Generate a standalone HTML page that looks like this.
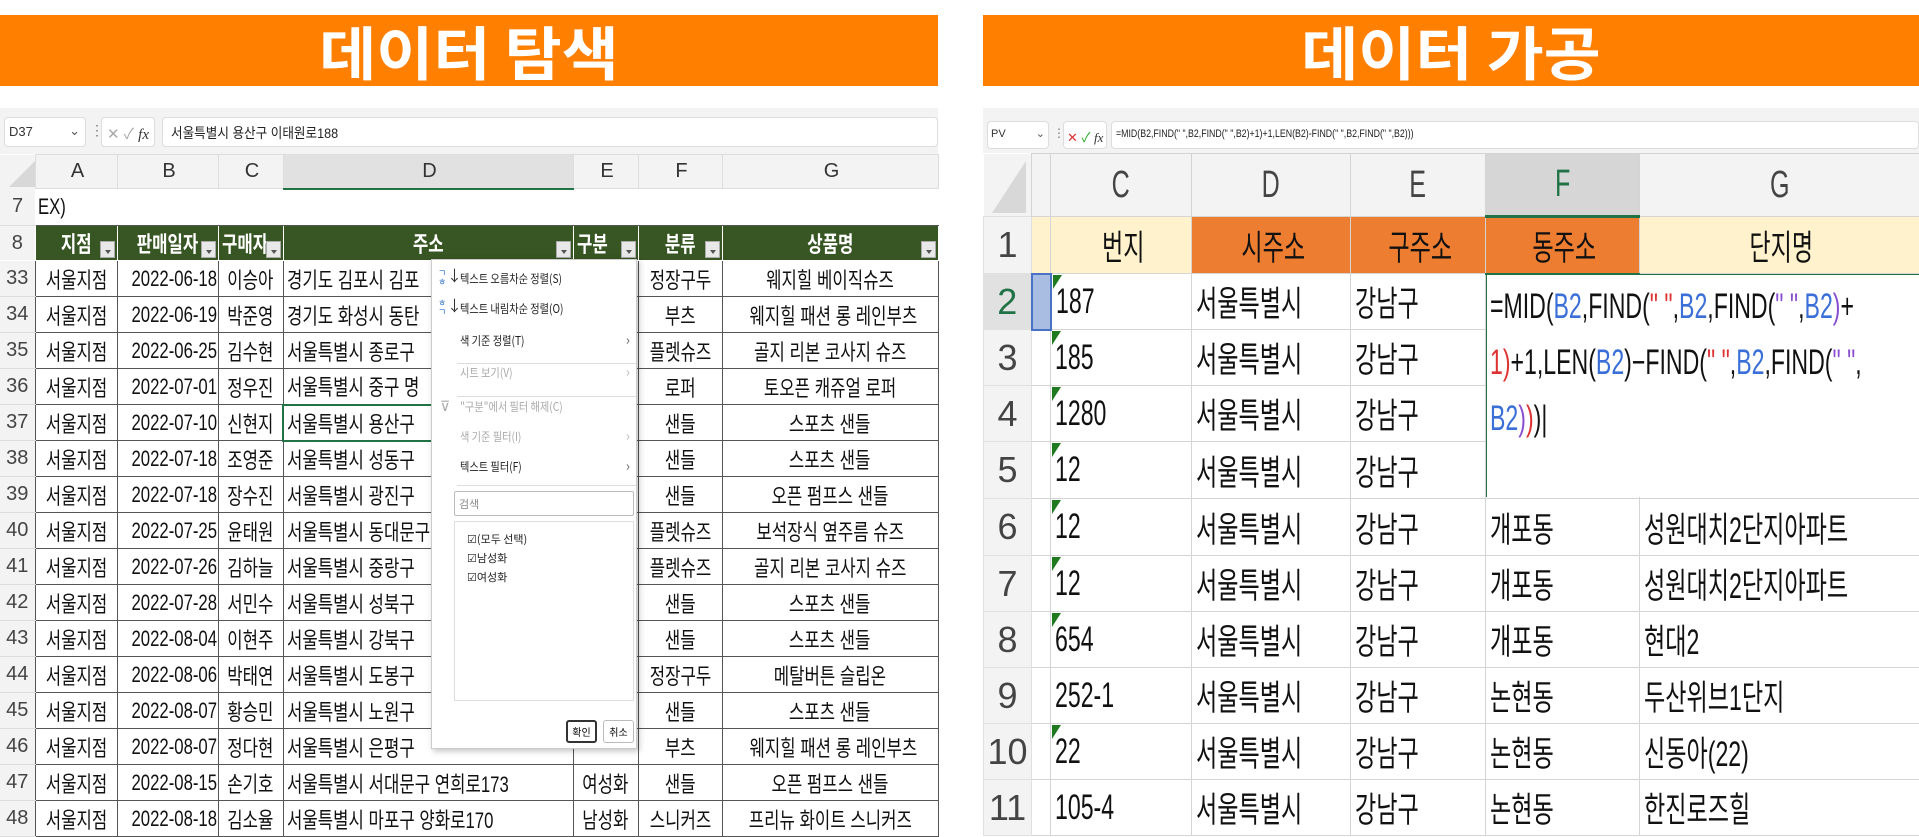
<!DOCTYPE html>
<html><head><meta charset="utf-8">
<style>
*{margin:0;padding:0;box-sizing:border-box}
body{width:1919px;height:835px;overflow:hidden;background:#fff;font-family:"Liberation Sans","Noto Sans CJK KR",sans-serif;position:relative}
.ban{position:absolute;top:15px;height:71px;background:#ff7f00;color:#fff;font-weight:bold;font-size:58px;text-align:center;line-height:71px;font-family:"Noto Sans CJK KR",sans-serif}
.ban span{display:inline-block;transform:scaleX(1.07)}
.gray{position:absolute;background:#f3f3f3}
.fbar{position:absolute;background:#fff;border:1px solid #ddd;border-radius:4px}
.t{display:inline-block;transform:scaleX(.76);transform-origin:left center;white-space:nowrap}
.c .t{transform-origin:center center}
table{position:absolute;border-collapse:collapse;table-layout:fixed}
td{overflow:hidden;white-space:nowrap;padding:0}
#L td{font-size:22px;color:#111;border:1px solid #555;padding-left:3px}
#L td.c{text-align:center;padding-left:0}
#L tr.h td{background:#f3f3f3;color:#333;font-size:20px;border:1px solid #ddd;text-align:center}
#L td.rh{background:#f3f3f3;color:#444;font-size:20px;text-align:center;border:none;border-bottom:1px solid #ddd;padding:0}
#L tr.g td{background:#375623;color:#fff;font-weight:bold;position:relative;border-color:#fff}
.fb{position:absolute;right:2px;bottom:2px;width:15px;height:17px;background:#e8e8e8;border:1px solid #aaa}
.fb:after{content:"";position:absolute;left:4px;top:8px;border:3px solid transparent;border-top:4px solid #555}
#R td{font-size:35px;color:#111;border:1px solid #d4d4d4;padding-left:4px;position:relative}
#R .t{transform:scaleX(.66)}
#R tr.h td{background:#f3f3f3;color:#444;font-size:38px;text-align:center;padding:0}
#R td.rh{background:#f3f3f3;color:#444;font-size:36px;text-align:center;padding:0;border-color:#e0e0e0}
.tri{position:absolute;left:1px;top:1px;border-left:9px solid #1f7a1f;border-bottom:14px solid transparent}
.menu{position:absolute;left:431px;top:259px;width:206px;height:490px;background:#fff;border:1px solid #ccc;box-shadow:2px 2px 6px rgba(0,0,0,.25);font-family:"Noto Sans CJK KR",sans-serif}
.mi{position:absolute;left:28px;font-size:12px;color:#222;transform:scaleX(.85);transform-origin:left}
.dis{color:#aaa}
.arr{position:absolute;right:6px;font-size:14px;color:#666}
.sep{position:absolute;left:25px;right:0;height:1px;background:#ddd}
</style></head><body>
<div class="ban" style="left:0;width:938px"><span>데이터 탐색</span></div>
<div class="ban" style="left:983px;width:936px"><span>데이터 가공</span></div>

<!-- LEFT -->
<div class="gray" style="left:0;top:108px;width:938px;height:46px"></div>
<div class="fbar" style="left:4px;top:117px;width:82px;height:30px;font-size:13px;padding:6px 0 0 4px;color:#333">D37<span style="position:absolute;right:5px;top:5px;color:#555">⌄</span></div>
<div style="position:absolute;left:90px;top:122px;color:#777;font-size:14px">⋮</div>
<div class="fbar" style="left:101px;top:117px;width:54px;height:30px;font-size:15px;color:#aaa;padding:5px 0 0 5px">✕ ✓ <i style="color:#333;font-family:'Liberation Serif'">fx</i></div>
<div class="fbar" style="left:162px;top:117px;width:776px;height:30px;font-size:14px;color:#222;padding:5px 0 0 8px"><span class="t" style="transform:scaleX(.9)">서울특별시 용산구 이태원로188</span></div>

<table id="L" style="left:0;top:154px;width:938px">
<colgroup><col style="width:35px"><col style="width:82px"><col style="width:101px"><col style="width:65px"><col style="width:290px"><col style="width:65px"><col style="width:84px"><col style="width:216px"></colgroup>
<tr class="h" style="height:34px"><td style="background:#f3f3f3;border:none"><div style="width:0;height:0;border-left:26px solid transparent;border-bottom:26px solid #d8d8d8;margin:4px 0 0 6px"></div></td><td>A</td><td>B</td><td>C</td><td style="background:#e1e1e1;border-bottom:2px solid #217346">D</td><td>E</td><td>F</td><td>G</td></tr>
<tr style="height:37px"><td class="rh">7</td><td colspan="7" style="border:none;border-bottom:1px solid #555"><span class="t">EX)</span></td></tr>
<tr class="g" style="height:35px"><td class="rh" style="background:#f3f3f3;color:#444;font-weight:normal">8</td>
<td class="c"><span class="t">지점</span><div class="fb"></div></td><td class="c"><span class="t">판매일자</span><div class="fb"></div></td><td><span class="t">구매자</span><div class="fb"></div></td><td class="c"><span class="t">주소</span><div class="fb"></div></td><td><span class="t">구분</span><div class="fb"></div></td><td class="c"><span class="t">분류</span><div class="fb"></div></td><td class="c"><span class="t">상품명</span><div class="fb"></div></td></tr>
<tr style="height:36px"><td class="rh">33</td><td class="c"><span class="t">서울지점</span></td><td class="c"><span class="t">2022-06-18</span></td><td class="c"><span class="t">이승아</span></td><td><span class="t">경기도 김포시 김포</span></td><td></td><td class="c"><span class="t">정장구두</span></td><td class="c"><span class="t">웨지힐 베이직슈즈</span></td></tr>
<tr style="height:36px"><td class="rh">34</td><td class="c"><span class="t">서울지점</span></td><td class="c"><span class="t">2022-06-19</span></td><td class="c"><span class="t">박준영</span></td><td><span class="t">경기도 화성시 동탄</span></td><td></td><td class="c"><span class="t">부츠</span></td><td class="c"><span class="t">웨지힐 패션 롱 레인부츠</span></td></tr>
<tr style="height:36px"><td class="rh">35</td><td class="c"><span class="t">서울지점</span></td><td class="c"><span class="t">2022-06-25</span></td><td class="c"><span class="t">김수현</span></td><td><span class="t">서울특별시 종로구</span></td><td></td><td class="c"><span class="t">플렛슈즈</span></td><td class="c"><span class="t">골지 리본 코사지 슈즈</span></td></tr>
<tr style="height:36px"><td class="rh">36</td><td class="c"><span class="t">서울지점</span></td><td class="c"><span class="t">2022-07-01</span></td><td class="c"><span class="t">정우진</span></td><td><span class="t">서울특별시 중구 명</span></td><td></td><td class="c"><span class="t">로퍼</span></td><td class="c"><span class="t">토오픈 캐쥬얼 로퍼</span></td></tr>
<tr style="height:36px"><td class="rh">37</td><td class="c"><span class="t">서울지점</span></td><td class="c"><span class="t">2022-07-10</span></td><td class="c"><span class="t">신현지</span></td><td style="border:2px solid #217346"><span class="t">서울특별시 용산구</span></td><td></td><td class="c"><span class="t">샌들</span></td><td class="c"><span class="t">스포츠 샌들</span></td></tr>
<tr style="height:36px"><td class="rh">38</td><td class="c"><span class="t">서울지점</span></td><td class="c"><span class="t">2022-07-18</span></td><td class="c"><span class="t">조영준</span></td><td><span class="t">서울특별시 성동구</span></td><td></td><td class="c"><span class="t">샌들</span></td><td class="c"><span class="t">스포츠 샌들</span></td></tr>
<tr style="height:36px"><td class="rh">39</td><td class="c"><span class="t">서울지점</span></td><td class="c"><span class="t">2022-07-18</span></td><td class="c"><span class="t">장수진</span></td><td><span class="t">서울특별시 광진구</span></td><td></td><td class="c"><span class="t">샌들</span></td><td class="c"><span class="t">오픈 펌프스 샌들</span></td></tr>
<tr style="height:36px"><td class="rh">40</td><td class="c"><span class="t">서울지점</span></td><td class="c"><span class="t">2022-07-25</span></td><td class="c"><span class="t">윤태원</span></td><td><span class="t">서울특별시 동대문구</span></td><td></td><td class="c"><span class="t">플렛슈즈</span></td><td class="c"><span class="t">보석장식 옆주름 슈즈</span></td></tr>
<tr style="height:36px"><td class="rh">41</td><td class="c"><span class="t">서울지점</span></td><td class="c"><span class="t">2022-07-26</span></td><td class="c"><span class="t">김하늘</span></td><td><span class="t">서울특별시 중랑구</span></td><td></td><td class="c"><span class="t">플렛슈즈</span></td><td class="c"><span class="t">골지 리본 코사지 슈즈</span></td></tr>
<tr style="height:36px"><td class="rh">42</td><td class="c"><span class="t">서울지점</span></td><td class="c"><span class="t">2022-07-28</span></td><td class="c"><span class="t">서민수</span></td><td><span class="t">서울특별시 성북구</span></td><td></td><td class="c"><span class="t">샌들</span></td><td class="c"><span class="t">스포츠 샌들</span></td></tr>
<tr style="height:36px"><td class="rh">43</td><td class="c"><span class="t">서울지점</span></td><td class="c"><span class="t">2022-08-04</span></td><td class="c"><span class="t">이현주</span></td><td><span class="t">서울특별시 강북구</span></td><td></td><td class="c"><span class="t">샌들</span></td><td class="c"><span class="t">스포츠 샌들</span></td></tr>
<tr style="height:36px"><td class="rh">44</td><td class="c"><span class="t">서울지점</span></td><td class="c"><span class="t">2022-08-06</span></td><td class="c"><span class="t">박태연</span></td><td><span class="t">서울특별시 도봉구</span></td><td></td><td class="c"><span class="t">정장구두</span></td><td class="c"><span class="t">메탈버튼 슬립온</span></td></tr>
<tr style="height:36px"><td class="rh">45</td><td class="c"><span class="t">서울지점</span></td><td class="c"><span class="t">2022-08-07</span></td><td class="c"><span class="t">황승민</span></td><td><span class="t">서울특별시 노원구</span></td><td></td><td class="c"><span class="t">샌들</span></td><td class="c"><span class="t">스포츠 샌들</span></td></tr>
<tr style="height:36px"><td class="rh">46</td><td class="c"><span class="t">서울지점</span></td><td class="c"><span class="t">2022-08-07</span></td><td class="c"><span class="t">정다현</span></td><td><span class="t">서울특별시 은평구</span></td><td></td><td class="c"><span class="t">부츠</span></td><td class="c"><span class="t">웨지힐 패션 롱 레인부츠</span></td></tr>
<tr style="height:36px"><td class="rh">47</td><td class="c"><span class="t">서울지점</span></td><td class="c"><span class="t">2022-08-15</span></td><td class="c"><span class="t">손기호</span></td><td><span class="t">서울특별시 서대문구 연희로173</span></td><td class="c"><span class="t">여성화</span></td><td class="c"><span class="t">샌들</span></td><td class="c"><span class="t">오픈 펌프스 샌들</span></td></tr>
<tr style="height:36px"><td class="rh">48</td><td class="c"><span class="t">서울지점</span></td><td class="c"><span class="t">2022-08-18</span></td><td class="c"><span class="t">김소율</span></td><td><span class="t">서울특별시 마포구 양화로170</span></td><td class="c"><span class="t">남성화</span></td><td class="c"><span class="t">스니커즈</span></td><td class="c"><span class="t">프리뉴 화이트 스니커즈</span></td></tr>
</table>

<div class="menu">
<div style="position:absolute;left:6px;top:8px;font-size:9px;color:#2a6fc9;line-height:9px">ㄱ<br>ㅎ</div><div style="position:absolute;left:15px;top:5px;font-size:15px;color:#333">↓</div>
<div class="mi" style="top:10px">텍스트 오름차순 정렬(S)</div>
<div style="position:absolute;left:6px;top:38px;font-size:9px;color:#2a6fc9;line-height:9px">ㅎ<br>ㄱ</div><div style="position:absolute;left:15px;top:35px;font-size:15px;color:#333">↓</div>
<div class="mi" style="top:40px">텍스트 내림차순 정렬(O)</div>
<div class="mi" style="top:72px">색 기준 정렬(T)</div><div class="arr" style="top:70px">›</div>
<div class="sep" style="top:103px"></div>
<div class="mi dis" style="top:104px">시트 보기(V)</div><div class="arr" style="top:102px;color:#bbb">›</div>
<div class="sep" style="top:136px"></div>
<div style="position:absolute;left:8px;top:136px;font-size:14px;color:#aaa">⊽</div>
<div class="mi dis" style="top:138px">"구분"에서 필터 해제(C)</div>
<div class="mi dis" style="top:168px">색 기준 필터(I)</div><div class="arr" style="top:166px;color:#bbb">›</div>
<div class="mi" style="top:198px">텍스트 필터(F)</div><div class="arr" style="top:196px">›</div>
<div class="sep" style="top:225px"></div>
<div style="position:absolute;left:22px;top:231px;width:180px;height:25px;border:1px solid #bbb;border-radius:2px;font-size:11px;color:#888;padding:4px 0 0 4px">검색</div>
<div style="position:absolute;left:22px;top:261px;width:180px;height:180px;border:1px solid #ddd"></div>
<div style="position:absolute;left:35px;top:270px;font-size:11px;color:#222;line-height:19px">☑(모두 선택)<br>☑남성화<br>☑여성화</div>
<div style="position:absolute;left:134px;top:460px;width:31px;height:23px;border:2px solid #333;border-radius:3px;font-size:10px;text-align:center;line-height:19px">확인</div>
<div style="position:absolute;left:171px;top:460px;width:31px;height:23px;border:1px solid #bbb;border-radius:3px;font-size:10px;text-align:center;line-height:21px">취소</div>
</div>

<!-- RIGHT -->
<div class="gray" style="left:983px;top:108px;width:936px;height:45px"></div>
<div class="fbar" style="left:987px;top:121px;width:62px;height:28px;font-size:11px;color:#333;padding:6px 0 0 3px">PV<span style="position:absolute;right:3px;top:5px;color:#555">⌄</span></div>
<div style="position:absolute;left:1053px;top:126px;color:#777;font-size:12px">⋮</div>
<div class="fbar" style="left:1063px;top:121px;width:44px;height:28px;font-size:13px;padding:5px 0 0 3px"><span style="color:#d33">✕</span> <span style="color:#2a2">✓</span> <i style="color:#333;font-family:'Liberation Serif'">fx</i></div>
<div class="fbar" style="left:1111px;top:121px;width:808px;height:28px;font-size:11px;color:#222;padding:6px 0 0 4px"><span class="t" style="transform:scaleX(.8)">=MID(B2,FIND(" ",B2,FIND(" ",B2)+1)+1,LEN(B2)-FIND(" ",B2,FIND(" ",B2)))</span></div>

<table id="R" style="left:983px;top:153px;width:936px">
<colgroup><col style="width:48px"><col style="width:19px"><col style="width:141px"><col style="width:159px"><col style="width:135px"><col style="width:154px"><col style="width:280px"></colgroup>
<tr class="h" style="height:63px"><td style="border:none"><div style="width:0;height:0;border-left:34px solid transparent;border-bottom:52px solid #d8d8d8;margin:4px 0 0 8px"></div></td><td></td><td><span class="t" style="transform-origin:center">C</span></td><td><span class="t" style="transform-origin:center">D</span></td><td><span class="t" style="transform-origin:center">E</span></td><td style="background:#d6d6d6;color:#217346;border-bottom:3px solid #217346"><span class="t" style="transform-origin:center">F</span></td><td><span class="t" style="transform-origin:center">G</span></td></tr>
<tr style="height:57px"><td class="rh">1</td><td style="background:#fff2cc"></td><td style="background:#fff2cc;text-align:center"><span class="t" style="transform-origin:center">번지</span></td><td style="background:#ed7d31;text-align:center"><span class="t" style="transform-origin:center">시주소</span></td><td style="background:#ed7d31;text-align:center"><span class="t" style="transform-origin:center">구주소</span></td><td style="background:#ed7d31;text-align:center;border-bottom:2px solid #217346"><span class="t" style="transform-origin:center">동주소</span></td><td style="background:#fff2cc;text-align:center"><span class="t" style="transform-origin:center">단지명</span></td></tr>
<tr style="height:56px"><td class="rh" style="background:#e1e1e1;color:#217346">2</td><td style="background:#a9bde3;border:2px solid #4a72c4"></td><td><div class="tri"></div><span class="t">187</span></td><td><span class="t">서울특별시</span></td><td><span class="t">강남구</span></td><td></td><td></td></tr>
<tr style="height:56px"><td class="rh">3</td><td></td><td><div class="tri"></div><span class="t">185</span></td><td><span class="t">서울특별시</span></td><td><span class="t">강남구</span></td><td></td><td></td></tr>
<tr style="height:56px"><td class="rh">4</td><td></td><td><div class="tri"></div><span class="t">1280</span></td><td><span class="t">서울특별시</span></td><td><span class="t">강남구</span></td><td></td><td></td></tr>
<tr style="height:57px"><td class="rh">5</td><td></td><td><div class="tri"></div><span class="t">12</span></td><td><span class="t">서울특별시</span></td><td><span class="t">강남구</span></td><td></td><td></td></tr>
<tr style="height:57px"><td class="rh">6</td><td></td><td><div class="tri"></div><span class="t">12</span></td><td><span class="t">서울특별시</span></td><td><span class="t">강남구</span></td><td><span class="t">개포동</span></td><td><span class="t">성원대치2단지아파트</span></td></tr>
<tr style="height:56px"><td class="rh">7</td><td></td><td><div class="tri"></div><span class="t">12</span></td><td><span class="t">서울특별시</span></td><td><span class="t">강남구</span></td><td><span class="t">개포동</span></td><td><span class="t">성원대치2단지아파트</span></td></tr>
<tr style="height:56px"><td class="rh">8</td><td></td><td><div class="tri"></div><span class="t">654</span></td><td><span class="t">서울특별시</span></td><td><span class="t">강남구</span></td><td><span class="t">개포동</span></td><td><span class="t">현대2</span></td></tr>
<tr style="height:56px"><td class="rh">9</td><td></td><td><span class="t">252-1</span></td><td><span class="t">서울특별시</span></td><td><span class="t">강남구</span></td><td><span class="t">논현동</span></td><td><span class="t">두산위브1단지</span></td></tr>
<tr style="height:56px"><td class="rh">10</td><td></td><td><div class="tri"></div><span class="t">22</span></td><td><span class="t">서울특별시</span></td><td><span class="t">강남구</span></td><td><span class="t">논현동</span></td><td><span class="t">신동아(22)</span></td></tr>
<tr style="height:56px"><td class="rh">11</td><td></td><td><span class="t">105-4</span></td><td><span class="t">서울특별시</span></td><td><span class="t">강남구</span></td><td><span class="t">논현동</span></td><td><span class="t">한진로즈힐</span></td></tr>
</table>

<div style="position:absolute;left:1486px;top:274px;width:433px;height:223px;background:#fff;border-left:1px solid #217346;border-top:1px solid #217346;font-size:35px;line-height:56px;color:#111;padding:4px 0 0 3px">
<div class="t" style="transform:scaleX(.66)">=MID(<span style="color:#3a6fd8">B2</span>,FIND(<span style="color:#d33">" "</span>,<span style="color:#3a6fd8">B2</span>,FIND(<span style="color:#8a4fd0">" "</span>,<span style="color:#3a6fd8">B2</span><span style="color:#8a4fd0">)</span>+</div><br>
<div class="t" style="transform:scaleX(.66)"><span style="color:#d33">1)</span>+1,LEN(<span style="color:#3a6fd8">B2</span>)−FIND(<span style="color:#d33">" "</span>,<span style="color:#3a6fd8">B2</span>,FIND(<span style="color:#8a4fd0">" "</span>,</div><br>
<div class="t" style="transform:scaleX(.66)"><span style="color:#3a6fd8">B2</span><span style="color:#8a4fd0">)</span><span style="color:#d33">)</span>)|</div>
</div>
</body></html>
